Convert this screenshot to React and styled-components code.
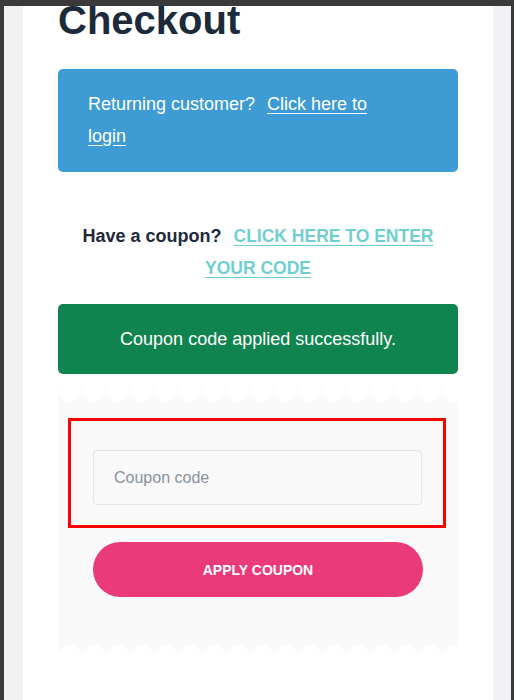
import React from "react";
import styled, { createGlobalStyle } from "styled-components";

const GlobalStyle = createGlobalStyle`
  html, body {
    margin: 0;
    padding: 0;
    background: #3a3a3a;
    font-family: "Liberation Sans", Arial, sans-serif;
  }
  * { box-sizing: border-box; }
`;

const Frame = styled.div`
  height: 100vh;
  overflow: hidden;
  padding: 6px 3px 0 4px;
`;

const Backdrop = styled.div`
  height: 100%;
  background: #f1f2f4;
  padding: 0 18px 0 19px;
`;

const Page = styled.main`
  height: 100%;
  overflow: hidden;
  background: #ffffff;
  padding: 0 35px;
`;

const Title = styled.h1`
  margin: -10px 0 25px;
  font-size: 40px;
  line-height: 48px;
  font-weight: 700;
  color: #1c2a39;
`;

const Notice = styled.div`
  border-radius: 5px;
  color: #ffffff;
  font-size: 18px;
  background: ${(p) => (p.$tone === "success" ? "#10844f" : "#3e9bd3")};
  padding: ${(p) => (p.$tone === "success" ? "24px 20px" : "19px 70px 20px 30px")};
  line-height: ${(p) => (p.$tone === "success" ? "22px" : "32px")};
  text-align: ${(p) => (p.$tone === "success" ? "center" : "left")};
`;

const NoticeLink = styled.a`
  color: #ffffff;
  text-decoration: underline;
  text-underline-offset: 3px;
  margin-left: 12px;
  cursor: pointer;
`;

const CouponPrompt = styled.p`
  margin: 48px 0 20px;
  padding: 0 8px;
  text-align: center;
  font-size: 18px;
  line-height: 32px;
  font-weight: 700;
  color: #1c2a39;
`;

const CouponToggle = styled.a`
  margin-left: 12px;
  color: #6fcfd0;
  font-size: 17.5px;
  text-decoration: underline;
  text-underline-offset: 3px;
  cursor: pointer;
`;

const CouponForm = styled.form`
  margin-top: 11px;
  padding: 33px 35px 58px;
  background:
    radial-gradient(circle at 12px 5px, #ffffff 11px, transparent 12px) 0 0 / 24px 24px repeat-x,
    radial-gradient(circle at 12px 26px, #ffffff 11px, transparent 12px) 0 100% / 24px 24px repeat-x,
    #f9f9f9;
`;

const Highlight = styled.div`
  margin: 0 -23px 14px -25px;
  padding: 29px 21px 20px 22px;
  border: 3px solid #ff0000;
`;

const CouponInput = styled.input`
  display: block;
  width: 100%;
  height: 55px;
  padding: 0 20px;
  border: 1px solid #e3e3e3;
  border-radius: 4px;
  background: #f9f9f9;
  font-family: inherit;
  font-size: 16px;
  color: #1c2a39;
  outline: none;

  &::placeholder {
    color: #8a92a0;
  }
`;

const ApplyButton = styled.button`
  display: block;
  width: 100%;
  height: 55px;
  border: none;
  border-radius: 28px;
  background: #ea3a7a;
  color: #ffffff;
  font-family: inherit;
  font-size: 14px;
  font-weight: 700;
  cursor: pointer;
`;

export default function App() {
  return (
    <>
      <GlobalStyle />
      <Frame>
        <Backdrop>
          <Page>
            <Title>Checkout</Title>

            <Notice>
              Returning customer?
              <NoticeLink>Click here to login</NoticeLink>
            </Notice>

            <CouponPrompt>
              Have a coupon?
              <CouponToggle>CLICK HERE TO ENTER YOUR CODE</CouponToggle>
            </CouponPrompt>

            <Notice $tone="success">Coupon code applied successfully.</Notice>

            <CouponForm onSubmit={(e) => e.preventDefault()}>
              <Highlight>
                <CouponInput type="text" placeholder="Coupon code" />
              </Highlight>
              <ApplyButton type="submit">APPLY COUPON</ApplyButton>
            </CouponForm>
          </Page>
        </Backdrop>
      </Frame>
    </>
  );
}
